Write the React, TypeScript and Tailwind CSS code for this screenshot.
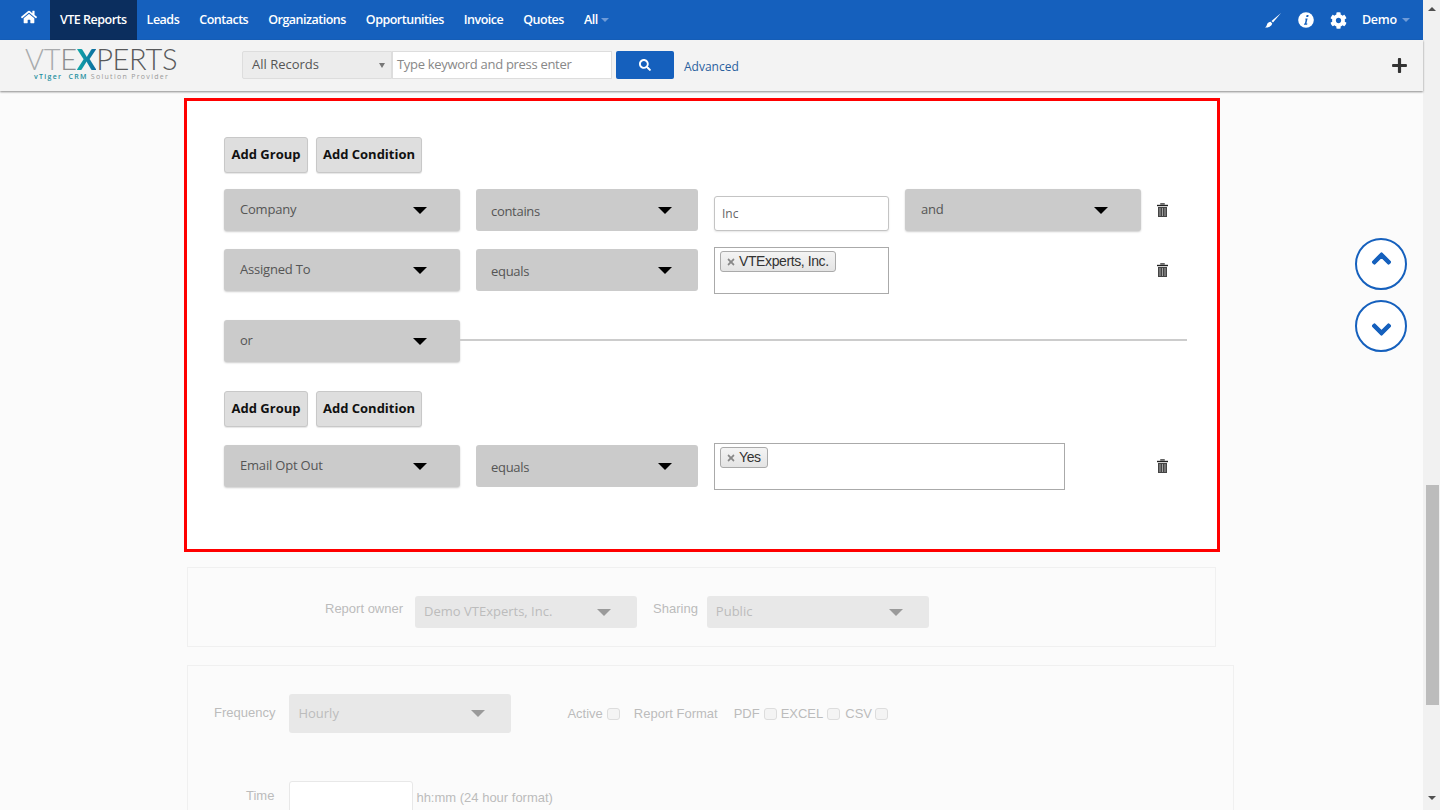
import { FaChevronDown, FaChevronUp, FaCog, FaHome, FaPlus, FaSearch, FaTimes } from 'react-icons/fa';

const navItems = ['Leads', 'Contacts', 'Organizations', 'Opportunities', 'Invoice', 'Quotes'];

const Caret = ({ className }: { className: string }) => (
  <span className={`h-0 w-0 border-x-[7px] border-t-[7px] border-x-transparent ${className}`} />
);

const TrashIcon = () => (
  <svg width="11" height="14" viewBox="0 0 11 14" className="block">
    <path d="M3.5 1.5V.5h4v1M0 2h11v1H0z" fill="#222" stroke="#222" strokeWidth="0.4" />
    <path d="M1 4h9v10H1z" fill="#444" />
    <path d="M3 5v8M5.5 5v8M8 5v8" stroke="#bbb" strokeWidth="0.8" />
  </svg>
);

const BrushIcon = () => (
  <svg width="16" height="15" viewBox="0 0 16 15" className="mr-[17px] block">
    <path d="M16 0 6.5 8 8 9.5Z" fill="#fff" />
    <path d="M5.6 8.8 7.2 10.4C6.8 12.8 4.2 14.4 0 14.6 1.6 13.6 1.6 12.4 2.2 11 2.8 9.8 4.2 8.9 5.6 8.8Z" fill="#fff" />
  </svg>
);

const InfoIcon = () => (
  <svg width="16" height="16" viewBox="0 0 16 16" className="mr-[16px] block">
    <circle cx="8" cy="8" r="7.8" fill="#fff" />
    <path d="M8.6 3h2l-.4 2h-2zM7.5 6.4h2.1l-1.2 5.2h1l-.3 1.2H5.9l.3-1.2h.7l.8-4h-.5z" fill="#1560bd" />
  </svg>
);

const Select = ({ label, width }: { label: string; width: string }) => (
  <div
    className={`flex h-[42px] shrink-0 items-center justify-between rounded-[3px] bg-[#cbcbcb] pl-4 pr-[33px] shadow-[0_1px_2px_rgba(0,0,0,0.2)] ${width}`}
  >
    <span className="-mt-[1px] text-[13px] tracking-[-0.2px] text-[#555]">{label}</span>
    <Caret className="border-t-black" />
  </div>
);

const OperatorSelect = ({ label }: { label: string }) => (
  <div className="flex h-[42px] w-[222px] shrink-0 items-center justify-between rounded-[3px] bg-[#cbcbcb] pl-[15px] pr-[26px]">
    <span className="mt-[3px] text-[13px] tracking-[-0.3px] text-[#555]">{label}</span>
    <Caret className="border-t-black" />
  </div>
);

const GroupButtons = () => (
  <div className="flex gap-2">
    <button className="h-9 w-[84px] rounded-[3px] border border-[#c8c8c8] bg-[#dedede] text-[13px] font-bold text-[#111] shadow-[0_1px_1px_rgba(0,0,0,0.1)]">
      Add Group
    </button>
    <button className="h-9 w-[106px] rounded-[3px] border border-[#c8c8c8] bg-[#dedede] text-[13px] font-bold text-[#111] shadow-[0_1px_1px_rgba(0,0,0,0.1)]">
      Add Condition
    </button>
  </div>
);

const Tag = ({ label }: { label: string }) => (
  <div className="ml-[5px] mt-[3px] flex h-[21px] w-fit items-center gap-[3px] rounded-[3px] border border-[#aaa] bg-gradient-to-b from-[#f4f4f4] to-[#e4e4e4] pl-[5px] pr-[6px] text-[14px] tracking-[-0.4px] text-[#333]">
    <FaTimes className="text-[10px] text-[#888]" />
    <span className="-mt-[1px] [font-family:'Liberation_Sans',sans-serif]">{label}</span>
  </div>
);

const FadedSelect = ({ label, height }: { label: string; height: string }) => (
  <div className={`flex w-[222px] shrink-0 items-center justify-between rounded-[3px] bg-[#e8e8e8] pl-[9px] pr-[26px] ${height}`}>
    <span className="[font-family:'Open_Sans',sans-serif] text-[13px] text-[#bcbcbc]">{label}</span>
    <Caret className="border-t-[#9a9a9a]" />
  </div>
);

const FadedBox = () => <span className="h-[12px] w-[13px] rounded-[3px] border border-[#ddd] bg-[#f4f4f4]" />;

const App = () => {
  return (
    <div className="relative flex h-[810px] w-[1440px] overflow-hidden bg-[#fbfbfb] [font-family:'Open_Sans',sans-serif]">
      <div className="flex w-[1423px] shrink-0 flex-col">
        <header className="flex h-10 shrink-0 items-center bg-[#1560bd] text-[12.5px] font-semibold tracking-[-0.5px] text-white">
          <div className="flex w-[50px] justify-center pb-[6px] pl-[8px]">
            <FaHome className="text-[16px]" />
          </div>
          <a className="flex h-10 items-center bg-[#0b2e5e] px-[10px]">VTE Reports</a>
          {navItems.map((item) => (
            <a key={item} className="flex h-10 items-center px-[10px]">
              {item}
            </a>
          ))}
          <a className="flex h-10 items-center gap-[3px] pl-[10px]">
            All
            <span className="h-0 w-0 border-x-[4px] border-t-[4px] border-x-transparent border-t-[#6f9bd8]" />
          </a>
          <div className="ml-auto flex items-center pr-[13px]">
            <BrushIcon />
            <InfoIcon />
            <FaCog className="mr-[15px] text-[17px]" />
            <span className="tracking-[-0.2px]">Demo</span>
            <span className="ml-[5px] h-0 w-0 border-x-[4px] border-t-[4px] border-x-transparent border-t-[#6f9bd8]" />
          </div>
        </header>

        <div className="relative z-10 flex h-[51px] shrink-0 items-center bg-[#f3f3f3] pb-[1px] shadow-[0_1px_2px_rgba(0,0,0,0.45)]">
          <div className="ml-[25px] w-[151px] self-start pt-[7px]">
            <div className="flex h-[24px] items-center text-[29px] font-light leading-[24px] tracking-[-0.3px] [font-family:'Lato',sans-serif]">
              <span className="text-[#a9abad]">VT</span>
              <span className="text-[#8a8c8e]">E</span>
              <span className="bg-gradient-to-r from-[#14a9a8] to-[#0f6a9f] bg-clip-text font-black text-transparent">X</span>
              <span className="text-[#58595b]">PERTS</span>
            </div>
            <div className="mt-[2px] whitespace-nowrap pl-[9px] text-[7px] leading-[8px] tracking-[1.3px] text-[#999]">
              <span className="font-semibold text-[#1f8f9f]">vTiger</span>
              <span className="ml-[6px] font-semibold text-[#1f8f9f]">CRM</span> Solution Provider
            </div>
          </div>
          <div className="ml-[66px] flex h-7 w-[150px] items-center justify-between rounded-l-[2px] border border-[#ddd] bg-[#ececec] pl-[9px] pr-[6px] text-[13px] text-[#555]">
            All Records
            <span className="h-0 w-0 border-x-[3px] border-t-[5px] border-x-transparent border-t-[#777]" />
          </div>
          <div className="flex h-7 w-[220px] items-center border border-[#ddd] bg-white pl-[4px] text-[13px] tracking-[-0.3px] text-[#888]">
            Type keyword and press enter
          </div>
          <button className="ml-1 flex h-7 w-[58px] items-center justify-center rounded-[2px] bg-[#1560bd] text-white">
            <FaSearch className="text-[12px]" />
          </button>
          <a className="ml-[10px] mt-[3px] text-[12px] text-[#2a5f9e]">Advanced</a>
          <FaPlus className="ml-auto mr-[15px] text-[17px] text-[#333]" />
        </div>

        <main className="flex flex-col pl-[184px] pt-[7px]">
          <section className="h-[454px] w-[1036px] border-[3px] border-[#ff0000] bg-white pl-[37px] pt-[36px]">
            <GroupButtons />
            <div className="mt-4 flex h-[42px]">
              <Select label="Company" width="w-[236px]" />
              <div className="ml-4">
                <OperatorSelect label="contains" />
              </div>
              <div className="ml-4 mt-[7px] flex h-[35px] w-[175px] items-center rounded-[3px] border border-[#c4c4c4] bg-white pl-[7px] text-[12px] text-[#666] shadow-[0_1px_2px_rgba(0,0,0,0.1)]">
                Inc
              </div>
              <div className="ml-4">
                <Select label="and" width="w-[236px]" />
              </div>
              <div className="ml-4 flex items-center">
                <TrashIcon />
              </div>
            </div>
            <div className="mt-[18px] flex h-[42px]">
              <Select label="Assigned To" width="w-[236px]" />
              <div className="ml-4">
                <OperatorSelect label="equals" />
              </div>
              <div className="-mt-[2px] ml-4 h-[47px] w-[175px] border border-[#aaa] bg-white">
                <Tag label="VTExperts, Inc." />
              </div>
              <div className="ml-[268px] flex items-center">
                <TrashIcon />
              </div>
            </div>
            <div className="mt-[29px] flex items-center">
              <Select label="or" width="w-[236px]" />
              <div className="-mt-[2px] h-[2px] w-[727px] bg-[#ccc]" />
            </div>
            <div className="mt-[29px]">
              <GroupButtons />
            </div>
            <div className="mt-[18px] flex h-[42px]">
              <Select label="Email Opt Out" width="w-[236px]" />
              <div className="ml-4">
                <OperatorSelect label="equals" />
              </div>
              <div className="-mt-[2px] ml-4 h-[47px] w-[351px] border border-[#aaa] bg-white">
                <Tag label="Yes" />
              </div>
              <div className="ml-[92px] flex items-center">
                <TrashIcon />
              </div>
            </div>
          </section>

          <section className="ml-[3px] mt-[15px] flex h-[80px] w-[1029px] items-start border border-[#f0f0f0] pl-[137px] pt-[28px] text-[13px] text-[#bcbcbc] [font-family:'Liberation_Sans',sans-serif]">
            <span className="mr-[12px] mt-[3px]">Report owner</span>
            <FadedSelect label="Demo VTExperts, Inc." height="h-8" />
            <span className="ml-4 mr-[9px] mt-[3px]">Sharing</span>
            <FadedSelect label="Public" height="h-8" />
          </section>

          <section className="ml-[3px] mt-[18px] h-[200px] w-[1047px] border border-[#f0f0f0] text-[13px] text-[#bcbcbc] [font-family:'Liberation_Sans',sans-serif]">
            <div className="mt-[28px] flex items-center">
              <span className="-mt-[1px] ml-[26px] mr-[14px]">Frequency</span>
              <FadedSelect label="Hourly" height="h-[39px]" />
              <span className="ml-[56px] mr-[4px]">Active</span>
              <FadedBox />
              <span className="ml-[14px]">Report Format</span>
              <span className="ml-[16px] mr-[4px]">PDF</span>
              <FadedBox />
              <span className="ml-[4px] mr-[4px]">EXCEL</span>
              <FadedBox />
              <span className="ml-[5px] mr-[3px]">CSV</span>
              <FadedBox />
            </div>
            <div className="mt-[48px] flex">
              <span className="ml-[58px] mr-[15px] mt-[5px]">Time</span>
              <div className="h-[40px] w-[124px] rounded-[3px] border border-[#e8e8e8] bg-white" />
              <span className="ml-[3px] mt-[7px]">hh:mm (24 hour format)</span>
            </div>
          </section>
        </main>
      </div>

      <div className="flex w-[17px] shrink-0 flex-col items-center bg-[#f1f1f1]">
        <span className="mt-[7px] h-0 w-0 border-x-[4px] border-b-[4px] border-x-transparent border-b-[#505050]" />
        <div className="ml-[1px] mt-[474px] h-[220px] w-[13px] bg-[#bcbcbc]" />
        <span className="mt-[91px] h-0 w-0 border-x-[4px] border-t-[4px] border-x-transparent border-t-[#505050]" />
      </div>

      <div className="absolute left-[1355px] top-[238px] flex flex-col gap-[10px]">
        <button className="flex h-[52px] w-[52px] items-center justify-center rounded-full border-2 border-[#1560bd] bg-white text-[#1560bd]">
          <FaChevronUp className="-mt-[12px] stroke-[30px] text-[21px]" />
        </button>
        <button className="flex h-[52px] w-[52px] items-center justify-center rounded-full border-2 border-[#1560bd] bg-white text-[#1560bd]">
          <FaChevronDown className="mt-[7px] stroke-[30px] text-[21px]" />
        </button>
      </div>
    </div>
  );
};

export default App;
